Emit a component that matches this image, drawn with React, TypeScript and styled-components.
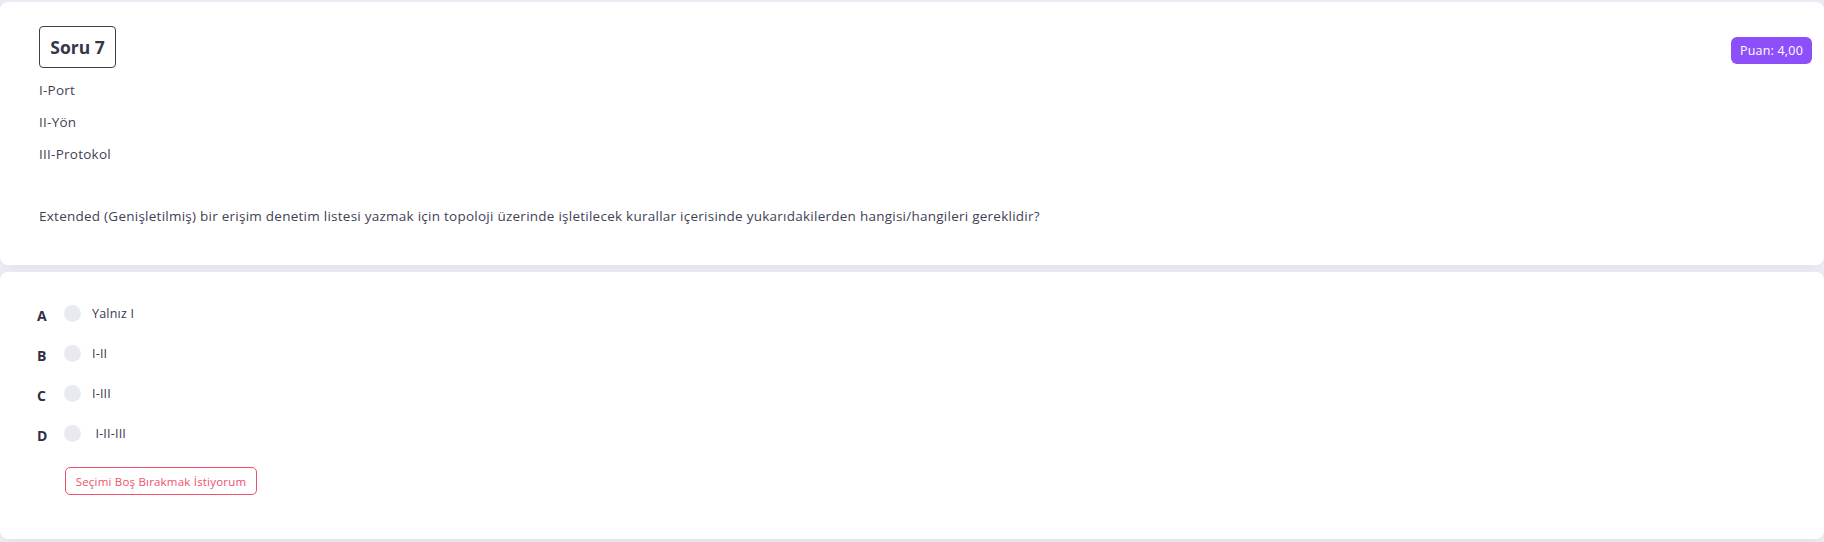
import React from "react";
import styled, { createGlobalStyle } from "styled-components";

const Global = createGlobalStyle`
  html, body { margin: 0; padding: 0; }
  body {
    background: #e9eaf3;
    font-family: "Open Sans", "Noto Sans", sans-serif;
    color: #3f4254;
  }
`;

const Page = styled.div`
  display: flex;
  flex-direction: column;
  gap: 7px;
  padding-top: 2px;
  height: 542px;
  box-sizing: border-box;
  overflow: hidden;
`;

const Card = styled.section<{ $h: number }>`
  background: #ffffff;
  border-radius: 8px;
  box-shadow: 0 6px 10px -8px rgba(80, 80, 120, 0.12);
  height: ${(p) => p.$h}px;
  box-sizing: border-box;
`;

const QuestionCard = styled(Card)`
  padding: 24px 12px 0 39px;
`;

const Header = styled.div`
  display: flex;
  justify-content: space-between;
  align-items: flex-start;
`;

const TitleBox = styled.div`
  width: 77px;
  height: 42px;
  box-sizing: border-box;
  border: 1px solid #3e3e4f;
  border-radius: 4px;
  display: flex;
  align-items: center;
  justify-content: center;
  font-size: 17.5px;
  font-weight: 700;
  color: #35364a;
`;

const Badge = styled.div`
  margin-top: 11px;
  height: 27px;
  padding: 0 9px;
  display: flex;
  align-items: center;
  background: #8d4ffa;
  color: #ffffff;
  border-radius: 6px;
  font-size: 12.5px;
  letter-spacing: 0.2px;
`;

const Para = styled.p<{ $gap?: number }>`
  margin: 0;
  font-size: 13.5px;
  letter-spacing: 0.25px;
  line-height: 20px;
  color: #3f4254;
  margin-top: ${(p) => p.$gap ?? 12}px;
`;

const OptionsCard = styled(Card)`
  padding: 23px 0 0 37px;
`;

const OptionRow = styled.label`
  display: flex;
  align-items: center;
  height: 40px;
`;

const Letter = styled.span`
  width: 27px;
  font-size: 14px;
  font-weight: 700;
  color: #2f3044;
  padding-top: 0;
`;

const Radio = styled.span`
  width: 17px;
  height: 17px;
  border-radius: 50%;
  background: #e9eaf1;
  margin-right: 11px;
  margin-top: -3px;
`;

const OptionText = styled.span`
  font-size: 12.5px;
  letter-spacing: 0.2px;
  color: #3a3b50;
  font-weight: 500;
  margin-top: -3px;
`;

const SkipButton = styled.button`
  margin: 12px 0 0 28px;
  width: 192px;
  height: 28px;
  border: 1px solid #f0506a;
  border-radius: 5px;
  background: #ffffff;
  color: #f0506a;
  font-family: inherit;
  font-size: 11.5px;
  letter-spacing: 0.2px;
  padding: 0;
`;

const options = [
  { k: "A", t: "Yalnız I" },
  { k: "B", t: "I-II" },
  { k: "C", t: "I-III" },
  { k: "D", t: "\u00a0I-II-III" },
];

export default function App() {
  return (
    <>
      <Global />
      <Page>
        <QuestionCard $h={263}>
          <Header>
            <TitleBox>Soru 7</TitleBox>
            <Badge>Puan: 4,00</Badge>
          </Header>
          <Para>I-Port</Para>
          <Para>II-Yön</Para>
          <Para>III-Protokol</Para>
          <Para $gap={42}>
            Extended (Genişletilmiş) bir erişim denetim listesi yazmak için topoloji üzerinde işletilecek
            kurallar içerisinde yukarıdakilerden hangisi/hangileri gereklidir?
          </Para>
        </QuestionCard>
        <OptionsCard $h={267}>
          {options.map((o) => (
            <OptionRow key={o.k}>
              <Letter>{o.k}</Letter>
              <Radio />
              <OptionText>{o.t}</OptionText>
            </OptionRow>
          ))}
          <SkipButton>Seçimi Boş Bırakmak İstiyorum</SkipButton>
        </OptionsCard>
      </Page>
    </>
  );
}
